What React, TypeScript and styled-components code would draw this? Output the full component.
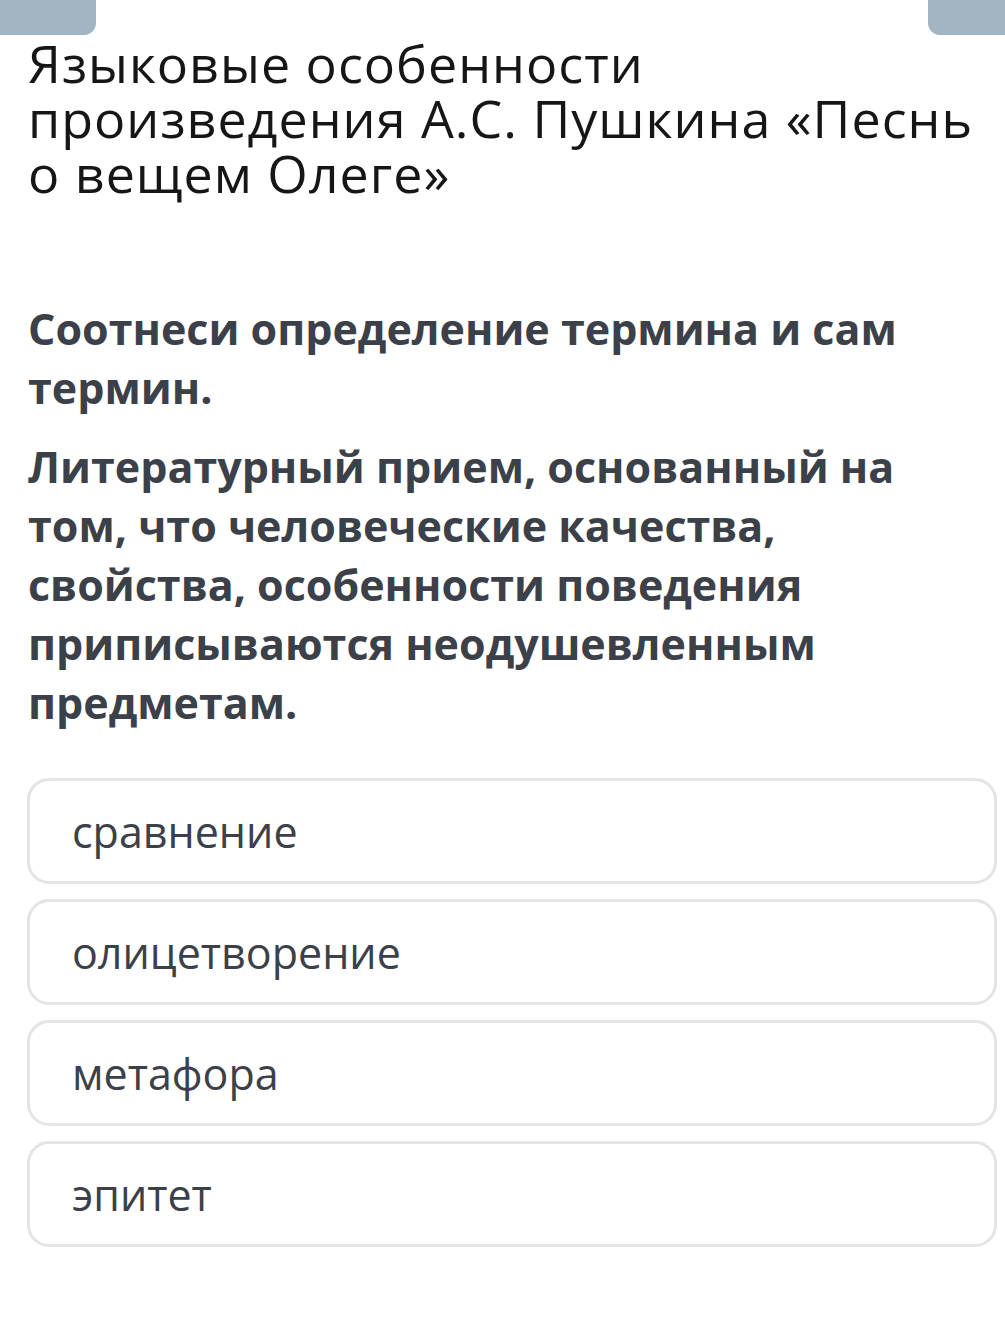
import React from 'react';
import styled, { createGlobalStyle } from 'styled-components';

const GlobalStyle = createGlobalStyle`
  html, body {
    margin: 0;
    padding: 0;
    background: #fff;
  }
  body {
    font-family: "Open Sans", "Noto Sans", sans-serif;
  }
`;

const options = ['сравнение', 'олицетворение', 'метафора', 'эпитет'];

const App: React.FC = () => {
  return (
    <>
      <GlobalStyle />
      <Page>
        <TabBar>
          <Tab side="left" />
          <Tab side="right" />
        </TabBar>
        <Content>
          <Title>Языковые особенности произведения А.С. Пушкина «Песнь о вещем Олеге»</Title>
          <Question>
            <QuestionText>Соотнеси определение термина и сам термин.</QuestionText>
            <QuestionText>
              Литературный прием, основанный на том, что человеческие качества, свойства,
              особенности поведения приписываются неодушевленным предметам.
            </QuestionText>
          </Question>
          <OptionList>
            {options.map((o) => (
              <Option key={o}>{o}</Option>
            ))}
          </OptionList>
        </Content>
      </Page>
    </>
  );
};

export default App;

const Page = styled.div`
  width: 1005px;
  min-height: 1323px;
  background: #fff;
`;

const TabBar = styled.div`
  display: flex;
  justify-content: space-between;
  height: 35px;
`;

const Tab = styled.div<{ side: 'left' | 'right' }>`
  width: ${(p) => (p.side === 'left' ? '96px' : '77px')};
  height: 35px;
  background: #a3b5c2;
  border-radius: ${(p) => (p.side === 'left' ? '0 0 12px 0' : '0 0 0 12px')};
`;

const Content = styled.div`
  padding: 0 8px 0 27px;
`;

const Title = styled.h1`
  margin: 0 20px 0 1px;
  font-size: 52px;
  line-height: 55px;
  letter-spacing: 1px;
  font-weight: 400;
  color: #161616;
`;

const Question = styled.div`
  margin-top: 99px;
  display: flex;
  flex-direction: column;
  gap: 20px;
  padding-right: 50px;
`;

const QuestionText = styled.p`
  margin: 0 0 0 1px;
  font-size: 43px;
  line-height: 59px;
  font-weight: 700;
  color: #3b4049;
`;

const OptionList = styled.div`
  margin-top: 46px;
  display: flex;
  flex-direction: column;
  gap: 15px;
`;

const Option = styled.div`
  box-sizing: border-box;
  height: 106px;
  display: flex;
  align-items: center;
  padding-left: 42px;
  border: 3px solid #e3e4e5;
  border-radius: 22px;
  font-size: 43px;
  color: #3b4049;
`;
